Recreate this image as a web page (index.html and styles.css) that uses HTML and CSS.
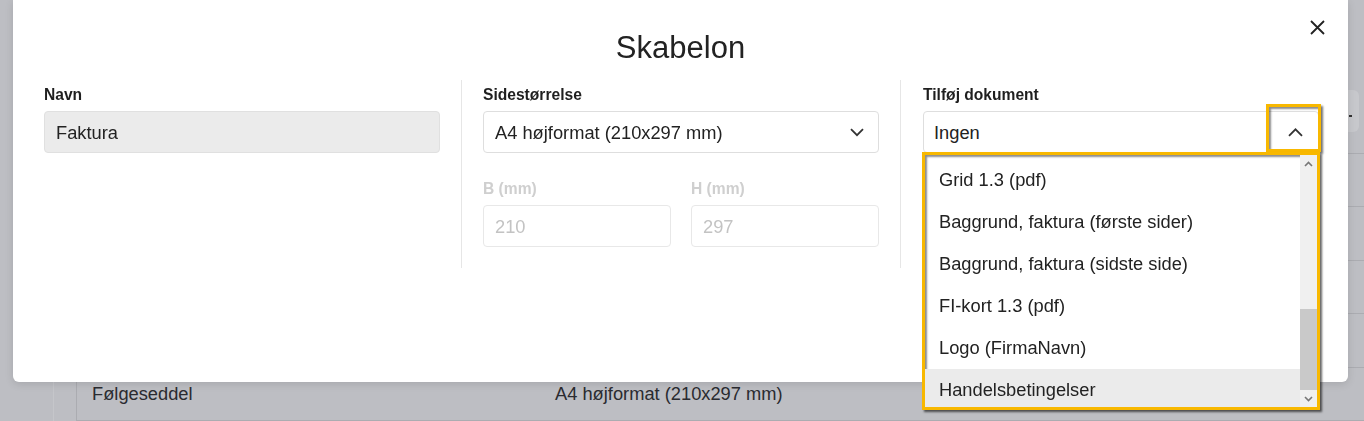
FILE: index.html
```html
<!DOCTYPE html>
<html lang="da">

<head>
    <meta charset="UTF-8">
    <meta name="viewport" content="width=device-width, initial-scale=1.0">
    <title>Skabelon</title>
    <link rel="stylesheet" href="styles.css">
</head>

<body>
    <div class="page">
        <div class="rail"></div>
        <main class="content">
            <div class="toolbar">
                <button class="page-btn"><span class="dash"></span></button>
            </div>
            <!-- the rows above sit behind the dialog -->
            <div class="table">
                <div class="row"></div>
                <div class="row"></div>
                <div class="row"></div>
                <div class="row"></div>
                <div class="row"><span class="cell-name">Følgeseddel</span><span>A4 højformat (210x297 mm)</span></div>
            </div>
        </main>
    </div>

    <div class="modal">
        <button class="close" aria-label="Luk">
            <svg width="15" height="15" viewBox="0 0 15 15">
                <path d="M1 1L14 14M14 1L1 14" stroke="#222" stroke-width="1.8" fill="none" />
            </svg>
        </button>

        <h1>Skabelon</h1>

        <div class="columns">
            <div class="col">
                <label class="field-label">Navn</label>
                <div class="input input-filled">Faktura</div>
            </div>

            <div class="col">
                <label class="field-label">Sidestørrelse</label>
                <div class="input select">
                    <span>A4 højformat (210x297 mm)</span>
                    <svg width="14" height="9" viewBox="0 0 14 9">
                        <path d="M1 1.2L7 7.2L13 1.2" stroke="#333" stroke-width="1.8" fill="none" />
                    </svg>
                </div>

                <div class="size-row">
                    <div>
                        <label class="field-label muted">B (mm)</label>
                        <div class="input disabled">210</div>
                    </div>
                    <div>
                        <label class="field-label muted">H (mm)</label>
                        <div class="input disabled">297</div>
                    </div>
                </div>
            </div>

            <div class="col">
                <label class="field-label">Tilføj dokument</label>
                <div class="dropdown">
                    <div class="input select">
                        <span>Ingen</span>
                        <svg width="15" height="9" viewBox="0 0 15 9">
                            <path d="M1 7.8L7.5 1.3L14 7.8" stroke="#333" stroke-width="1.8" fill="none" />
                        </svg>
                    </div>
                    <div class="mark"></div>
                    <div class="options">
                        <ul class="option-list">
                            <li>Grid 1.3 (pdf)</li>
                            <li>Baggrund, faktura (første sider)</li>
                            <li>Baggrund, faktura (sidste side)</li>
                            <li>FI-kort 1.3 (pdf)</li>
                            <li>Logo (FirmaNavn)</li>
                            <li class="active">Handelsbetingelser</li>
                        </ul>
                        <div class="scrollbar">
                            <span class="arrow">
                                <svg width="9" height="6" viewBox="0 0 9 6">
                                    <path d="M1 5L4.5 1.5L8 5" stroke="#777" stroke-width="1.6" fill="none" />
                                </svg>
                            </span>
                            <span class="track"><span class="thumb"></span></span>
                            <span class="arrow">
                                <svg width="9" height="6" viewBox="0 0 9 6">
                                    <path d="M1 1L4.5 4.5L8 1" stroke="#777" stroke-width="1.6" fill="none" />
                                </svg>
                            </span>
                        </div>
                    </div>
                </div>
            </div>
        </div>
    </div>
</body>

</html>
```

FILE: styles.css
```css
body {
    margin: 0;
    font-family: "Liberation Sans", Arial, sans-serif;
    background-color: #bdbec3;
    color: #222;
    overflow: hidden;
}

/* page behind the dialog */
.page {
    display: flex;
    height: 100vh;
}

.rail {
    width: 53px;
    border-right: 1px solid #c5c6ca;
}

.content {
    flex: 1;
    margin-left: 22px;
    border-left: 1px solid #abacb1;
}

.toolbar {
    display: flex;
    justify-content: flex-end;
    height: 153px;
    padding-top: 90px;
    box-sizing: border-box;
}

.page-btn {
    display: flex;
    justify-content: flex-end;
    width: 120px;
    height: 42px;
    margin-right: 5px;
    padding: 25px 7px 0 0;
    border: none;
    border-radius: 6px;
    background-color: #c7c8cc;
}

.dash {
    width: 3px;
    height: 2px;
    background-color: #333;
}

.table {
    border-bottom: 1px solid #abacb1;
}

.row {
    display: grid;
    grid-template-columns: 478px 1fr;
    align-items: center;
    height: 53.4px;
    border-top: 1px solid #abacb1;
    box-sizing: border-box;
    font-size: 18.3px;
    color: #2a2b30;
}

.cell-name {
    padding-left: 15px;
}

/* dialog */
.modal {
    position: fixed;
    top: 0;
    left: 13px;
    width: 1335px;
    height: 382px;
    padding: 0 29px 0 31px;
    box-sizing: border-box;
    background-color: #fff;
    border-radius: 0 0 6px 6px;
    box-shadow: 0 2px 8px rgba(0, 0, 0, 0.12);
}

.close {
    position: absolute;
    top: 20px;
    right: 23px;
    width: 15px;
    height: 15px;
    padding: 0;
    border: none;
    background: none;
    line-height: 0;
}

h1 {
    margin: 30px 0 14px -2px;
    font-size: 31px;
    font-weight: normal;
    line-height: 36px;
    text-align: center;
}

.columns {
    display: flex;
}

.col {
    width: 396px;
    padding: 5px 21px 21px;
}

.col:first-child {
    padding-left: 0;
}

.col:last-child {
    padding-left: 22px;
    padding-right: 0;
}

.col + .col {
    border-left: 1px solid #e6e6e6;
}

.field-label {
    display: block;
    margin-bottom: 6px;
    font-size: 15.6px;
    font-weight: bold;
    line-height: 20px;
    color: #1f1f1f;
}

.field-label.muted {
    color: #cfcfcf;
}

.input {
    display: flex;
    align-items: center;
    height: 42px;
    padding: 1px 14px 0 11px;
    box-sizing: border-box;
    border: 1px solid #dedede;
    border-radius: 4px;
    background-color: #fff;
    font-size: 18.3px;
}

.input-filled {
    background-color: #ebebeb;
    border-color: #e0e0e0;
}

.select {
    justify-content: space-between;
}

.disabled {
    border-color: #e8e8e8;
    color: #c3c3c3;
}

.size-row {
    display: grid;
    grid-template-columns: 188px 188px;
    gap: 20px;
    margin-top: 26px;
}

/* open dropdown with the highlight marks */
.dropdown {
    position: relative;
}

.dropdown .select {
    padding-left: 10px;
    padding-right: 15px;
}

.mark {
    position: absolute;
    top: -7px;
    left: 343px;
    width: 55px;
    height: 48px;
    box-sizing: border-box;
    border: 3px solid #f8b800;
    box-shadow: 2px 2px 2px rgba(0, 0, 0, 0.55), inset 2px 2px 2px rgba(0, 0, 0, 0.45);
}

.options {
    position: absolute;
    top: 41px;
    left: -1px;
    z-index: 2;
    display: flex;
    width: 398px;
    height: 258px;
    box-sizing: border-box;
    border: 3px solid #f8b800;
    background-color: #fff;
    box-shadow: 2px 2px 2px rgba(0, 0, 0, 0.6), inset 2px 2px 2px rgba(0, 0, 0, 0.45);
}

.option-list {
    flex: 1;
    margin: 0;
    padding: 4px 0 0;
    overflow: hidden;
    list-style: none;
}

.option-list li {
    height: 42px;
    padding-left: 14px;
    font-size: 18.3px;
    line-height: 42px;
}

.option-list li.active {
    background-color: #ebebeb;
}

.scrollbar {
    display: flex;
    flex-direction: column;
    width: 17px;
    background-color: #f0f0f0;
}

.arrow {
    display: flex;
    align-items: center;
    justify-content: center;
    height: 17px;
}

.track {
    display: flex;
    flex: 1;
    flex-direction: column;
    justify-content: flex-end;
}

.thumb {
    height: 81px;
    background-color: #c9c9c9;
}
```
